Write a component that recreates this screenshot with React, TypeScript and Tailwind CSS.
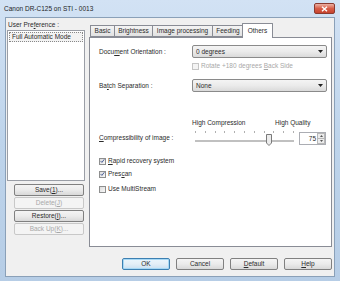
import React from "react";

const font = "font-['Liberation_Sans',Arial,sans-serif]";

function Check({ checked, disabled }: { checked?: boolean; disabled?: boolean }) {
  return (
    <div
      className={`w-[7px] h-[7px] border flex items-center justify-center ${
        disabled ? "border-[#c5c5c5] bg-[#f4f4f4]" : "border-[#8e8f8f] bg-gradient-to-br from-[#dcdcdc] to-[#f8f8f8]"
      }`}
    >
      {checked && (
        <svg width="6" height="6" viewBox="0 0 6 6">
          <path d="M0.8 3.1 L2.3 4.7 L5.2 0.9" fill="none" stroke="#4a5f97" strokeWidth="1.2" />
        </svg>
      )}
    </div>
  );
}

function Combo({ value }: { value: string }) {
  return (
    <div className="w-[135px] h-[13px] rounded-[2px] border border-[#8a8a8a] bg-gradient-to-b from-[#f4f4f4] via-[#ebebeb] to-[#dadada] flex items-center justify-between pl-[3px] pr-[3px]">
      <span>{value}</span>
      <svg width="5" height="3" viewBox="0 0 5 3">
        <path d="M0 0 H5 L2.5 3 Z" fill="#222" />
      </svg>
    </div>
  );
}

function Btn({
  children,
  disabled,
  def,
  w,
}: {
  children: React.ReactNode;
  disabled?: boolean;
  def?: boolean;
  w: string;
}) {
  return (
    <div
      className={`${w} h-[12px] rounded-[2px] border flex items-center justify-center ${
        disabled
          ? "border-[#c8c8c8] bg-[#f4f4f4] text-[#a8a8a8]"
          : def
          ? "border-[#3c7fb1] bg-gradient-to-b from-[#eaf6fd] via-[#e3eef7] to-[#c9e0f1] shadow-[inset_0_0_0_1px_#a6d8f5]"
          : "border-[#808080] bg-gradient-to-b from-[#f4f4f4] via-[#ebebeb] to-[#d9d9d9]"
      }`}
    >
      <span>{children}</span>
    </div>
  );
}

function Tab({ label, w, selected }: { label: string; w: string; selected?: boolean }) {
  return selected ? (
    <div
      className={`${w} h-[15px] -mx-[2px] -mb-[1px] z-10 border border-b-0 border-[#898c95] bg-white flex items-center justify-center rounded-t-[1px]`}
    >
      {label}
    </div>
  ) : (
    <div
      className={`${w} h-[12px] border border-[#898c95] -ml-[1px] first:ml-0 bg-gradient-to-b from-[#f4f4f4] to-[#e2e2e2] flex items-center justify-center`}
    >
      {label}
    </div>
  );
}

export default function App() {
  const ticks = Array.from({ length: 11 }, (_, i) => i);
  return (
    <div
      className={`${font} w-[340px] h-[281px] flex flex-col text-[6.5px] leading-[8px] text-[#2b2b2b] bg-gradient-to-b from-[#d2e2f4] via-[#bed4eb] to-[#b6cde6]`}
    >
      {/* title bar */}
      <div className="h-[17px] flex items-center justify-between pl-[4px] pr-[5px]">
        <span className="text-[6.5px] text-[#1e1e1e]">Canon DR-C125 on STI - 0013</span>
        <div className="w-[21px] h-[11px] rounded-[2px] border border-[#8a3a30] bg-gradient-to-b from-[#eab0a4] via-[#d75d48] to-[#c6432e] flex items-center justify-center">
          <svg width="7" height="6" viewBox="0 0 7 6">
            <path d="M1 0.8 L6 5.2 M6 0.8 L1 5.2" stroke="#fff" strokeWidth="1.4" />
          </svg>
        </div>
      </div>

      {/* client area */}
      <div className="mx-[5px] mb-[4px] flex-1 border border-[#8aa0b8] bg-[#f0f0f0] flex flex-col">
        <div className="flex">
          {/* left column */}
          <div className="ml-[1px] w-[78px] flex flex-col">
            <div className="pt-[3px] pl-[1px] h-[11px]">
              User Pre<u>f</u>erence :
            </div>
            <div className="mt-[1px] h-[151px] border border-[#9a9ea6] bg-white p-[1px]">
              <div className="h-[10px] flex items-center pl-[2px] bg-[#f3f3f3] border border-dotted border-[#888]">
                Full Automatic Mode
              </div>
            </div>
            <div className="ml-[7px] mt-[3px] flex flex-col gap-[1px]">
              <Btn w="w-[70px]">
                Save(<u>1</u>)...
              </Btn>
              <Btn w="w-[70px]" disabled>
                Delete(<u>J</u>)
              </Btn>
              <Btn w="w-[70px]">
                Restore(<u>I</u>)...
              </Btn>
              <Btn w="w-[70px]" disabled>
                Back Up(<u>K</u>)...
              </Btn>
            </div>
          </div>

          {/* tab control */}
          <div className="ml-[4px] w-[243px] flex flex-col">
            <div className="h-[19px] flex items-end pl-[1px]">
              <Tab label="Basic" w="w-[25px]" />
              <Tab label="Brightness" w="w-[39px]" />
              <Tab label="Image processing" w="w-[61px]" />
              <Tab label="Feeding" w="w-[32px]" />
              <Tab label="Others" w="w-[31px]" selected />
            </div>
            <div className="h-[210px] border border-[#898c95] bg-white flex flex-col pl-[9px]">
              <div className="mt-[7px] h-[13px] flex items-center">
                <span className="w-[93px]">
                  Docu<u>m</u>ent Orientation :
                </span>
                <Combo value="0 degrees" />
              </div>
              <div className="mt-[4px] h-[8px] flex items-center pl-[93px] gap-[2px] text-[#a8a8a8]">
                <Check disabled />
                <span>
                  Rotate +180 degrees <u>B</u>ack Side
                </span>
              </div>
              <div className="mt-[9px] h-[13px] flex items-center">
                <span className="w-[93px]">
                  Ba<u>t</u>ch Separation :
                </span>
                <Combo value="None" />
              </div>
              <div className="mt-[27px] h-[8px] flex items-center pl-[93px]">
                <span className="w-[83px]">High Compression</span>
                <span>High Quality</span>
              </div>
              <div className="mt-[2px] h-[18px] flex items-center">
                <span className="w-[96px]">
                  <u>C</u>ompressibility of image :
                </span>
                <div className="relative w-[99px] h-[18px]">
                  <div className="absolute left-0 right-0 top-[2px] flex justify-between">
                    {ticks.map((t) => (
                      <div key={t} className="w-[1px] h-[2px] bg-[#b0b0b0]" />
                    ))}
                  </div>
                  <div className="absolute left-0 right-0 top-[11px] h-[2px] border border-[#c0c0c0] bg-[#e7eaea]" />
                  <svg className="absolute left-[71px] top-[5px]" width="6" height="12" viewBox="0 0 6 12">
                    <path d="M0.5 0.5 H5.5 V9 L3 11.5 L0.5 9 Z" fill="#ececec" stroke="#7a7a7a" />
                  </svg>
                </div>
                <div className="ml-[5px] w-[27px] h-[13px] border border-[#abadb3] bg-white flex">
                  <span className="flex-1 text-right pr-[1px] leading-[11px]">75</span>
                  <div className="w-[8px] flex flex-col">
                    <div className="flex-1 border border-[#b8b8b8] bg-[#ececec] flex items-center justify-center">
                      <svg width="3" height="2" viewBox="0 0 3 2">
                        <path d="M0 2 H3 L1.5 0 Z" fill="#555" />
                      </svg>
                    </div>
                    <div className="flex-1 border border-t-0 border-[#b8b8b8] bg-[#ececec] flex items-center justify-center">
                      <svg width="3" height="2" viewBox="0 0 3 2">
                        <path d="M0 0 H3 L1.5 2 Z" fill="#555" />
                      </svg>
                    </div>
                  </div>
                </div>
              </div>
              <div className="mt-[10px] h-[8px] flex items-center gap-[2px]">
                <Check checked />
                <span>
                  <u>R</u>apid recovery system
                </span>
              </div>
              <div className="mt-[5px] h-[8px] flex items-center gap-[2px]">
                <Check checked />
                <span>
                  Pres<u>c</u>an
                </span>
              </div>
              <div className="mt-[7px] h-[8px] flex items-center gap-[2px]">
                <Check />
                <span>Use MultiStream</span>
              </div>
            </div>
          </div>
        </div>

        {/* bottom buttons */}
        <div className="mt-[11px] flex justify-end gap-[6px] pr-[2px]">
          <Btn w="w-[48px]" def>
            OK
          </Btn>
          <Btn w="w-[48px]">Cancel</Btn>
          <Btn w="w-[48px]">
            <u>D</u>efault
          </Btn>
          <Btn w="w-[48px]">
            <u>H</u>elp
          </Btn>
        </div>
      </div>
    </div>
  );
}
